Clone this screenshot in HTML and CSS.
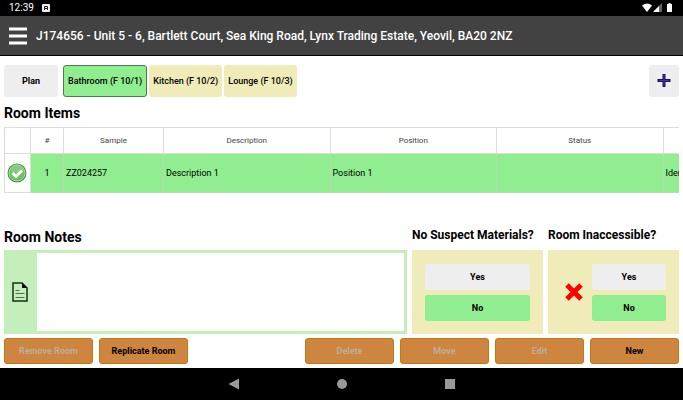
FILE: index.html
```html
<!DOCTYPE html>
<html lang="en">
<head>
<meta charset="utf-8">
<meta name="viewport" content="width=device-width, initial-scale=1">
<title>Room Items</title>
<link rel="stylesheet" href="styles.css">
</head>
<body>
<div class="status-bar">
  <span class="clock">12:39</span>
  <svg class="status-app" viewBox="0 0 8 8" width="8" height="8" aria-hidden="true"><rect width="8" height="8" rx="1" fill="#eee"/><path d="M2.5 6V2.5h3V6M2.5 4.5h3" fill="none" stroke="#222"/></svg>
  <svg class="status-signal" viewBox="0 0 32 10" width="32" height="10" aria-hidden="true"><path d="M0 2.500Q5-1.500 10 2.500L5 9z" fill="#fff"/><path d="M20 0v9h-9z" fill="#666"/><path d="M17 3v6h-6z" fill="#fff"/><path d="M25 1h1.500V0h2v1H30v8h-5z" fill="#fff"/></svg>
</div>
<header class="app-bar">
  <button class="menu" type="button" aria-label="Menu">
    <svg viewBox="0 0 18 18" width="18" height="18"><path d="M0 2h18M0 9h18M0 16h18" stroke="#fff" stroke-width="3"/></svg>
  </button>
  <h1 class="job">J174656 - Unit 5 - 6, Bartlett Court, Sea King Road, Lynx Trading Estate, Yeovil, BA20 2NZ</h1>
</header>
<main class="page">
  <nav class="rooms">
    <button class="btn plan" type="button">Plan</button>
    <div class="tabs">
      <button class="tab tab-active" type="button">Bathroom (F 10/1)</button>
      <button class="tab" type="button">Kitchen (F 10/2)</button>
      <button class="tab" type="button">Lounge (F 10/3)</button>
    </div>
    <button class="btn add" type="button" aria-label="Add room">
      <svg viewBox="0 0 14 14" width="14" height="14"><path d="M7 0v13M0.500 6.500h13" stroke="#1c0f6e" stroke-width="3"/><path d="M7 1v11M2 6.500h10" stroke="#43389a"/></svg>
    </button>
  </nav>
  <h2 class="title">Room Items</h2>
  <div class="table-wrap">
    <table class="items">
      <colgroup><col class="c-check"><col class="c-num"><col class="c-sample"><col class="c-text"><col class="c-text"><col class="c-text"><col class="c-text"></colgroup>
      <thead><tr><th></th><th>#</th><th>Sample</th><th>Description</th><th>Position</th><th>Status</th><th></th></tr></thead>
      <tbody><tr>
        <td class="check"><svg viewBox="0 0 20 20" width="20" height="20" role="img" aria-label="Complete"><circle cx="10" cy="10" r="9.500" fill="#3d963a"/><circle cx="10" cy="10" r="8" fill="#70be67" stroke="#a9dca0"/><path d="M3 8a7 7 0 0 1 14 0q-7 4-14 0" fill="#96d38d" opacity=".6"/><path d="M5.500 10l3.500 3.500L15 7.500" fill="none" stroke="#fff" stroke-width="3"/></svg></td>
        <td class="num">1</td><td>ZZ024257</td><td>Description 1</td><td>Position 1</td><td></td><td>Identified</td>
      </tr></tbody>
    </table>
  </div>
  <div class="panels">
    <section class="notes-col">
      <h2 class="title"><label for="notes">Room Notes</label></h2>
      <div class="notes">
        <svg class="doc" viewBox="0 0 16 20" width="16" height="20" aria-hidden="true"><path d="M1 1h9l5 5v13H1z" fill="none" stroke="#16301a" stroke-width="1.500"/><path d="M10 0.500V6h5.500z" fill="#111"/><path d="M3.500 8.500h4M3.500 11.500h9M3.500 15.500h9" stroke="#4d7050"/></svg>
        <textarea id="notes"></textarea>
      </div>
    </section>
    <section class="choice-col">
      <h3 class="question">No Suspect Materials?</h3>
      <div class="choice">
        <div class="answers">
          <button class="btn" type="button">Yes</button>
          <button class="btn btn-on" type="button">No</button>
        </div>
      </div>
    </section>
    <section class="choice-col">
      <h3 class="question">Room Inaccessible?</h3>
      <div class="choice">
        <svg class="cross" viewBox="0 0 20 20" width="20" height="20" aria-hidden="true"><path d="M3 3l14 14M17 3L3 17" stroke="#f00" stroke-width="5"/></svg>
        <div class="answers">
          <button class="btn" type="button">Yes</button>
          <button class="btn btn-on" type="button">No</button>
        </div>
      </div>
    </section>
  </div>
  <div class="actions">
    <button class="action" type="button" disabled>Remove Room</button>
    <button class="action" type="button">Replicate Room</button>
    <button class="action action-split" type="button" disabled>Delete</button>
    <button class="action" type="button" disabled>Move</button>
    <button class="action" type="button" disabled>Edit</button>
    <button class="action" type="button">New</button>
  </div>
</main>
<footer class="nav-bar">
  <button type="button" aria-label="Back"><svg viewBox="0 0 12 12" width="12" height="12"><path d="M11 0.500v11L0.500 6z" fill="#999"/></svg></button>
  <button type="button" aria-label="Home"><svg viewBox="0 0 12 12" width="12" height="12"><circle cx="6" cy="6" r="5" fill="#999"/></svg></button>
  <button type="button" aria-label="Recent apps"><svg viewBox="0 0 12 12" width="12" height="12"><path d="M1 1h10v10H1z" fill="#999"/></svg></button>
</footer>
</body>
</html>
```
FILE: styles.css
```css
* {
  box-sizing: border-box;
}

body {
  margin: 0;
  min-height: 100vh;
  display: flex;
  flex-direction: column;
  background: #fff;
  color: #000;
  font: 9px/12px Roboto, sans-serif;
}

button {
  margin: 0;
  padding: 0;
  border: 0;
  background: none;
  color: inherit;
  font: inherit;
  white-space: nowrap;
}

svg {
  display: block;
  flex: none;
}

h1,
h2,
h3 {
  margin: 0;
}

.status-bar {
  display: flex;
  align-items: center;
  height: 16px;
  padding: 0 9px;
  gap: 8px;
  background: #000;
  color: #fff;
  font-size: 10px;
}

.status-signal {
  margin-left: auto;
}

.app-bar {
  display: flex;
  align-items: center;
  gap: 9px;
  height: 40px;
  padding: 0 9px;
  background: #424242;
  border-bottom: 1px solid #000;
  color: #fff;
}

.job {
  font-size: 12px;
  font-weight: 500;
  line-height: 16px;
}

.page {
  flex: 1;
  display: flex;
  flex-direction: column;
  padding: 9px 4px 4px;
}

.rooms {
  display: flex;
  gap: 5px;
  height: 32px;
}

.btn {
  height: 26px;
  border-radius: 3px;
  background: #eee;
  font-weight: 700;
}

.btn-on {
  background: #90ee90;
}

.plan {
  width: 54px;
  height: 32px;
}

.add {
  display: grid;
  place-items: center;
  width: 30px;
  height: 32px;
  margin-left: auto;
}

.tabs {
  display: flex;
  gap: 2px;
}

.tab {
  padding: 0 4px;
  border-radius: 3px;
  background: #f0ecb9;
  font-weight: 500;
}

.tab-active {
  border: 1px solid #4d7a4d;
  background: #90ee90;
}

.title {
  font-size: 14px;
  line-height: 20px;
}

.rooms + .title {
  margin: 6px 0 4px;
}

.table-wrap {
  overflow: hidden;
}

.items {
  width: 826px;
  table-layout: fixed;
  border-collapse: collapse;
}

.c-check {
  width: 26px;
}

.c-num {
  width: 33px;
}

.c-sample {
  width: 100px;
}

.items th,
.items td {
  border: 1px solid #ddd;
  padding: 0 2px;
}

.items th {
  height: 26px;
  color: #444;
  font-size: 8px;
  font-weight: 400;
}

.items td {
  height: 39px;
  border-color: #b2dbb2;
  background: #90ee90;
}

.items .check {
  border-color: #ddd;
  background: #fff;
}

.items .num {
  text-align: center;
}

.panels {
  display: flex;
  gap: 5px;
  margin-top: auto;
}

.notes-col {
  flex: 403;
}

.notes-col .title {
  height: 23px;
}

.choice-col {
  flex: 131;
}

.question {
  height: 23px;
  font-size: 12px;
  line-height: 16px;
}

.notes,
.choice {
  display: flex;
  align-items: center;
  height: 84px;
}

.notes {
  gap: 9px;
  padding: 3px 3px 3px 8px;
  background: #c4efbb;
}

.notes textarea {
  flex: 1;
  min-width: 0;
  height: 100%;
  padding: 4px;
  border: 0;
  background: #fff;
  color: inherit;
  font: inherit;
  resize: none;
}

.choice {
  gap: 8px;
  padding: 0 13px;
  background: #f0ecb9;
}

.cross {
  margin-left: 3px;
}

.answers {
  flex: 1;
  display: grid;
  gap: 5px;
}

.actions {
  display: flex;
  gap: 6px;
  margin-top: 4px;
}

.action {
  flex: 0 1 89px;
  height: 26px;
  border: 1px solid #c4780f;
  border-radius: 3px;
  background: #cd853f;
  font-weight: 700;
}

.action:disabled {
  color: #bcae9e;
}

.action-split {
  margin-left: auto;
}

.nav-bar {
  display: flex;
  justify-content: center;
  align-items: center;
  gap: 96px;
  height: 32px;
  background: #000;
}
```
